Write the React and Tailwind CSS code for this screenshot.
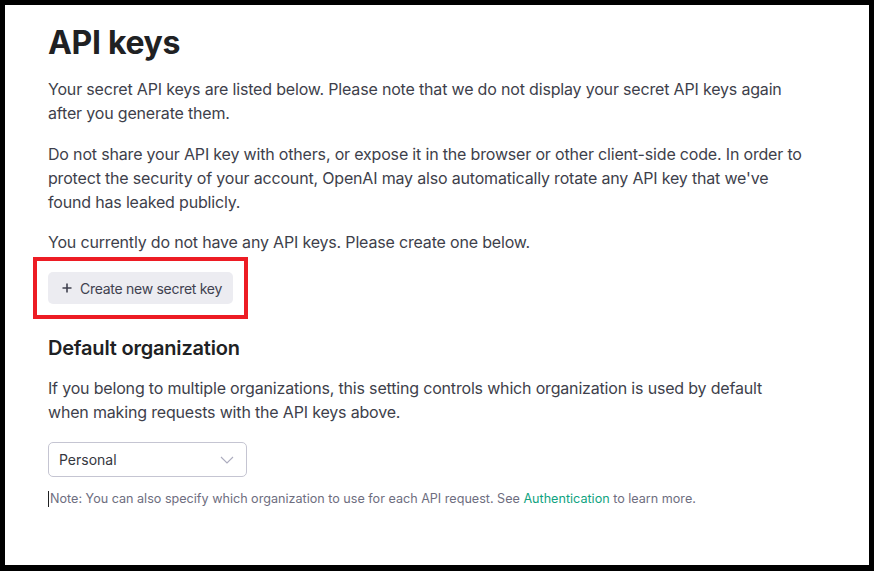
export default function App() {
  return (
    <div className="h-[571px] w-[874px] bg-black pt-[5px] pl-[5px] pr-[5px] pb-[6px]">
      <div className="h-full w-full bg-white pl-[43px] pt-[18px] font-['Inter',sans-serif] text-[#3e3f4b]">
        <h1 className="text-[32px] font-bold leading-[40px] tracking-[-0.01em] text-[#202123]">API keys</h1>

        <div className="mt-[14px] w-[780px] text-[16px] leading-[24px] tracking-[-0.011em]">
          <p>
            Your secret API keys are listed below. Please note that we do not display your secret API keys again
            <br />
            after you generate them.
          </p>
          <p className="mt-[17px]">
            Do not share your API key with others, or expose it in the browser or other client-side code. In order to
            <br />
            protect the security of your account, OpenAI may also automatically rotate any API key that we've
            <br />
            found has leaked publicly.
          </p>
          <p className="mt-[16px]">You currently do not have any API keys. Please create one below.</p>
        </div>

        <div className="ml-[-15px] mt-[3px] w-[215px] border-4 border-[#ed1c24] px-[11px] py-[11px]">
          <button className="flex h-[32px] w-[185px] items-center gap-[6px] rounded-[5px] bg-[#ececf1] pl-[12px] text-[14px] tracking-[-0.02em] text-[#40414f]">
            <svg width="14" height="14" viewBox="0 0 14 14" fill="none" stroke="#40414f" strokeWidth="1.6">
              <path d="M7 2.5v9M2.5 7h9" />
            </svg>
            Create new secret key
          </button>
        </div>

        <h2 className="mt-[15px] text-[20px] font-semibold leading-[28px] tracking-[-0.01em] text-[#202123]">
          Default organization
        </h2>
        <p className="mt-[14px] w-[780px] text-[16px] leading-[24px] tracking-[-0.011em]">
          If you belong to multiple organizations, this setting controls which organization is used by default
          <br />
          when making requests with the API keys above.
        </p>

        <div className="mt-[18px] flex h-[35px] w-[199px] items-center justify-between rounded-[5px] border border-[#c5c5d2] pl-[10px] pr-[12px] text-[14px] text-[#353740]">
          <span>Personal</span>
          <svg width="14" height="8" viewBox="0 0 14 8" fill="none" stroke="#acacbe" strokeWidth="1.1">
            <path d="M1 1l6 6 6-6" />
          </svg>
        </div>

        <p className="mt-[14px] flex items-center text-[12.6px] leading-[16px] text-[#6e6e80]">
          <span className="mr-[1px] inline-block h-[16px] w-px bg-[#202123]" />
          Note: You can also specify which organization to use for each API request. See&nbsp;
          <span className="text-[#10a37f]">Authentication</span>&nbsp;to learn more.
        </p>
      </div>
    </div>
  );
}
